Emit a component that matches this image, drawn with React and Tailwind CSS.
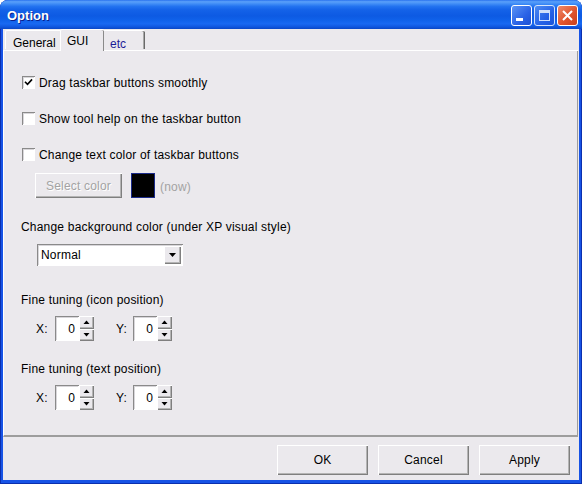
import React from "react";

const raised = "shadow-[inset_1px_1px_#ffffff,inset_-1px_-1px_#7f7f7f,inset_-2px_-2px_#b4b4b4]";
const sunken = "shadow-[inset_1px_1px_#8a8a8a,inset_-1px_-1px_#ffffff,inset_2px_2px_#d8d6da]";

function Checkbox({ checked }) {
  return (
    <div className={`w-[13px] h-[13px] bg-white shrink-0 flex items-center justify-center ${sunken}`}>
      {checked && (
        <svg width="9" height="9" viewBox="0 0 9 9">
          <path d="M1.5 4.3 L3.5 6.3 L7.5 2" stroke="#000" strokeWidth="1.6" fill="none" strokeLinecap="square" />
        </svg>
      )}
    </div>
  );
}

function CheckRow({ checked, label, className }) {
  return (
    <div className={`flex items-center h-[13px] ml-[18px] gap-[4px] ${className}`}>
      <Checkbox checked={checked} />
      <span className="leading-[14px]">{label}</span>
    </div>
  );
}

function SpinBtn({ up }) {
  return (
    <div className={`flex-1 bg-[#ebe9ed] flex items-center justify-center ${raised}`}>
      <svg width="7" height="4" viewBox="0 0 7 4">
        {up ? <path d="M0.5 4 L3.5 0.5 L6.5 4 Z" fill="#000" /> : <path d="M0.5 0 L3.5 3.5 L6.5 0 Z" fill="#000" />}
      </svg>
    </div>
  );
}

function Spinner() {
  return (
    <div className="flex h-[25px]">
      <div className={`w-[24px] h-full bg-white flex items-center justify-end pr-[4px] ${sunken}`}>0</div>
      <div className="w-[15px] h-full flex flex-col">
        <SpinBtn up />
        <SpinBtn />
      </div>
    </div>
  );
}

function SpinRow({ className }) {
  return (
    <div className={`flex items-center h-[25px] ml-[32px] ${className}`}>
      <span className="w-[19px]">X:</span>
      <Spinner />
      <span className="w-[17px] ml-[22px]">Y:</span>
      <Spinner />
    </div>
  );
}

function Button({ children }) {
  return (
    <div className={`w-[91px] h-[30px] flex items-center justify-center bg-[#ebe9ed] ${raised}`}>
      {children}
    </div>
  );
}

export default function App() {
  return (
    <div className="w-[582px] h-[484px] flex flex-col bg-[#1753e6] rounded-t-[8px] overflow-hidden shadow-[inset_1px_0_#0b2fae,inset_-1px_0_#0b2fae,inset_0_-1px_#0b2fae] font-['Liberation_Sans',Arial,sans-serif] text-[12px] tracking-[0.2px] text-black">
      {/* Title bar */}
      <div className="h-[29px] shrink-0 flex items-center justify-between pl-[7px] pr-[4px] bg-[linear-gradient(#2a72ee_0%,#5aa0fa_6%,#4490f7_12%,#2373f0_22%,#1462e8_34%,#0d5ae3_55%,#1062ea_70%,#1969f2_82%,#1058e0_92%,#0a47c6_100%)]">
        <span className="text-white font-bold text-[13px] tracking-normal pt-[3px] [text-shadow:1px_1px_#0a1e8a]">Option</span>
        <div className="flex gap-[2px] pt-[1px]">
          <div className="w-[21px] h-[21px] rounded-[3px] border border-white bg-[linear-gradient(135deg,#5b94f5,#2a62e6_60%,#1c50d4)] relative">
            <div className="absolute left-[4px] bottom-[4px] w-[7px] h-[3px] bg-white" />
          </div>
          <div className="w-[21px] h-[21px] rounded-[3px] border border-white bg-[linear-gradient(135deg,#5b94f5,#2a62e6_60%,#1c50d4)] flex items-center justify-center opacity-80">
            <div className="w-[11px] h-[11px] border border-white border-t-[3px]" />
          </div>
          <div className="w-[21px] h-[21px] rounded-[3px] border border-white bg-[linear-gradient(135deg,#ee8a6a,#e0552e_55%,#c8401c)] flex items-center justify-center">
            <svg width="11" height="11" viewBox="0 0 11 11">
              <path d="M1 1 L10 10 M10 1 L1 10" stroke="#fff" strokeWidth="2" />
            </svg>
          </div>
        </div>
      </div>

      {/* Body */}
      <div className="flex-1 flex flex-col mx-[3px] mb-[4px] bg-[#ebe9ed]">
        {/* Tabs */}
        <div className="h-[21px] flex items-end pl-[2px] relative z-10 tracking-normal">
          <div className="w-[55px] h-[19px] mb-[1px] pl-[7px] pt-[3px] border-t border-l border-white rounded-tl-[2px]">General</div>
          <div className="w-[44px] h-[22px] -mb-[1px] pl-[6px] pt-[2px] bg-[#ebe9ed] border-t border-l border-white shadow-[inset_-1px_0_#8a8a8a] rounded-t-[2px]">GUI</div>
          <div className="w-[41px] h-[19px] mb-[1px] pl-[6px] pt-[4px] text-[#1a1a96] border-t border-white shadow-[inset_-1px_0_#6a6a6a,inset_-2px_0_#a8a8a8] rounded-tr-[2px]">etc</div>
        </div>

        {/* Panel */}
        <div className="h-[387px] shrink-0 mr-[1px] border-t border-l border-white border-b-2 border-b-[#9d9d9d] shadow-[inset_-1px_0_#9d9d9d] flex flex-col">
          <CheckRow checked label="Drag taskbar buttons smoothly" className="mt-[25px]" />
          <CheckRow label="Show tool help on the taskbar button" className="mt-[23px]" />
          <CheckRow label="Change text color of taskbar buttons" className="mt-[23px]" />
          <div className="flex items-center h-[25px] mt-[12px] ml-[31px]">
            <div className={`w-[87px] h-[25px] flex items-center justify-center text-[#a3a3a3] [text-shadow:1px_1px_#ffffff] ${raised}`}>
              Select color
            </div>
            <div className="w-[24px] h-[25px] ml-[9px] bg-black border border-[#1a2a8a]" />
            <span className="ml-[5px] text-[#a3a3a3] pt-[2px]">(now)</span>
          </div>
          <div className="h-[14px] leading-[14px] mt-[22px] ml-[17px]">Change background color (under XP visual style)</div>
          <div className={`w-[146px] h-[22px] mt-[10px] ml-[33px] bg-white flex items-center justify-between pl-[4px] pr-[2px] ${sunken}`}>
            <span>Normal</span>
            <div className={`w-[17px] h-[18px] bg-[#ebe9ed] flex items-center justify-center ${raised}`}>
              <svg width="7" height="4" viewBox="0 0 7 4">
                <path d="M0 0 L7 0 L3.5 4 Z" fill="#000" />
              </svg>
            </div>
          </div>
          <div className="h-[14px] leading-[14px] mt-[27px] ml-[17px]">Fine tuning (icon position)</div>
          <SpinRow className="mt-[9px]" />
          <div className="h-[14px] leading-[14px] mt-[21px] ml-[17px]">Fine tuning (text position)</div>
          <SpinRow className="mt-[9px]" />
        </div>

        {/* Buttons */}
        <div className="flex justify-end gap-[10px] pt-[8px] pr-[9px]">
          <Button>OK</Button>
          <Button>Cancel</Button>
          <Button>Apply</Button>
        </div>
      </div>
    </div>
  );
}
